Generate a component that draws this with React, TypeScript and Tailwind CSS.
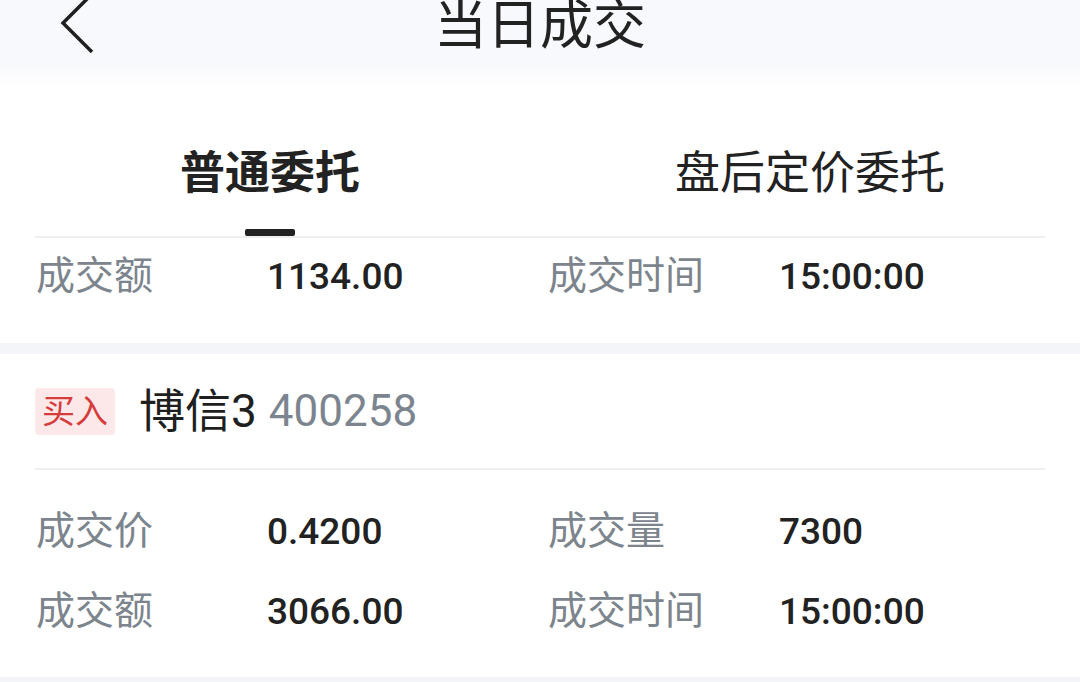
import React from 'react';

type Field = { label: string; value: string };

const FONT = "font-['Roboto','Noto_Sans_CJK_SC',sans-serif]";

// one line with two label/value pairs
const FieldRow: React.FC<{ left: Field; right: Field }> = ({ left, right }) => (
  <div className="flex h-[80px] items-center px-[36px]">
    <div className="flex w-[512px] items-center">
      <span className="w-[231px] text-[39px] leading-none text-[#7c848d]">{left.label}</span>
      <span className="text-[37px] font-medium leading-none text-[#222222]">{left.value}</span>
    </div>
    <div className="flex items-center">
      <span className="w-[231px] text-[39px] leading-none text-[#7c848d]">{right.label}</span>
      <span className="text-[37px] font-medium leading-none text-[#222222]">{right.value}</span>
    </div>
  </div>
);

const Band: React.FC = () => <div className="h-[11px] bg-[#f4f5f8]" />;

const Divider: React.FC = () => <div className="mx-[35px] h-[2px] bg-[#eeeff1]" />;

export default function App() {
  return (
    <div className={`h-[682px] w-[1080px] overflow-hidden bg-white ${FONT}`}>
      {/* Title bar */}
      <div className="h-[86px] bg-linear-to-b from-[#f8f9fc] from-75% to-white">
        <div className="grid h-[46px] grid-cols-[1fr_auto_1fr] grid-rows-[46px] items-center">
          <div className="flex h-[46px] items-center">
            <svg className="ml-[56px] shrink-0" width="40" height="60" viewBox="0 0 40 60" fill="none">
              <path d="M34 3 L7 30 L36 59" stroke="#1f1f1f" strokeWidth="3.5" />
            </svg>
          </div>
          <h1 className="mt-[6px] text-[53px] font-normal leading-none text-[#222222]">当日成交</h1>
          <div />
        </div>
      </div>

      {/* Tabs */}
      <div className="grid grid-cols-2">
        <div className="flex flex-col items-center pt-[65px]">
          <span className="text-[45px] font-bold leading-none text-[#222222]">普通委托</span>
          <div className="mt-[33px] h-[7px] w-[50px] rounded-[2px] bg-[#222222]" />
        </div>
        <div className="flex flex-col items-center pt-[65px]">
          <span className="text-[45px] leading-none text-[#222222]">盘后定价委托</span>
          <div className="mt-[33px] h-[7px]" />
        </div>
      </div>
      <Divider />

      {/* Card 1 (scrolled) */}
      <div className="pb-[27px]">
        <div className="-mt-[2px]">
          <FieldRow
            left={{ label: '成交额', value: '1134.00' }}
            right={{ label: '成交时间', value: '15:00:00' }}
          />
        </div>
      </div>
      <Band />

      {/* Card 2 */}
      <div>
        <div className="flex h-[114px] items-center px-[35px]">
          <span className="rounded-[4px] bg-[#fce8e8] px-[7px] py-[7px] text-[33px] leading-none text-[#d63b3b]">
            买入
          </span>
          <span className="ml-[24px] text-[46px] leading-none text-[#1f1f1f]">博信3</span>
          <span className="ml-[12px] text-[44px] leading-none text-[#7c858f]">400258</span>
        </div>
        <Divider />
        <div className="pt-[21px] pb-[26px]">
          <FieldRow
            left={{ label: '成交价', value: '0.4200' }}
            right={{ label: '成交量', value: '7300' }}
          />
          <FieldRow
            left={{ label: '成交额', value: '3066.00' }}
            right={{ label: '成交时间', value: '15:00:00' }}
          />
        </div>
      </div>
      <Band />
    </div>
  );
}
